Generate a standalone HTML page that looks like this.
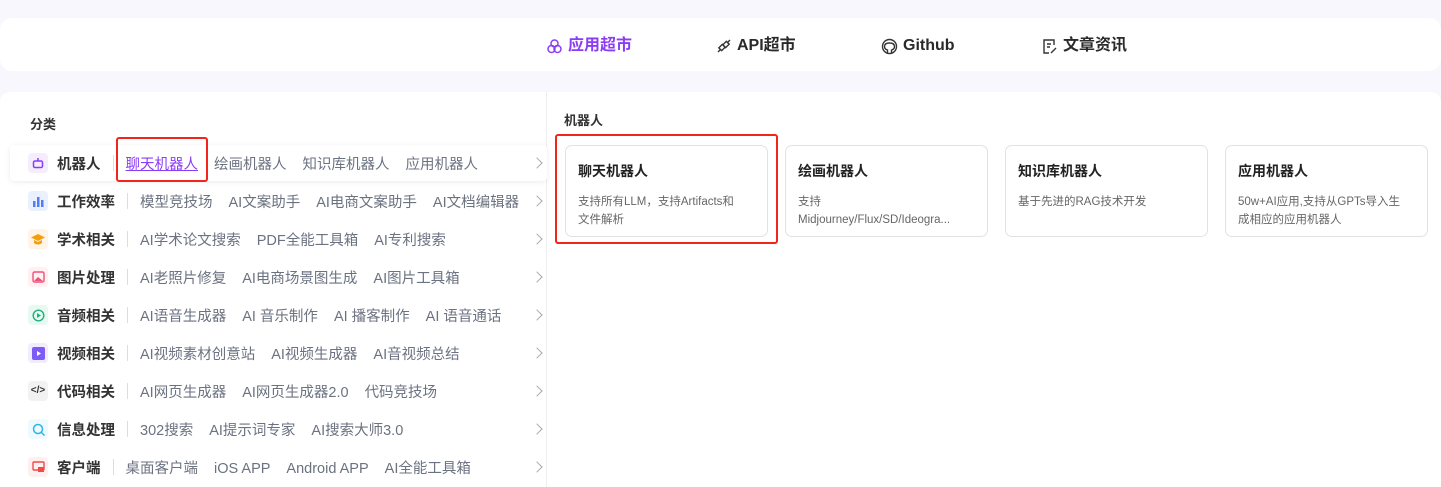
<!DOCTYPE html>
<html><head><meta charset="utf-8"><style>
*{box-sizing:border-box;margin:0;padding:0}
body{width:1441px;height:487px;background:#f8f7fd;font-family:"Liberation Sans","Noto Sans CJK SC",sans-serif;position:relative;overflow:hidden;color:#222}
.nav{position:absolute;left:0;top:18px;width:1441px;height:53px;background:#fff;border-radius:12px}
.nav .it{position:absolute;top:17px;height:22px;line-height:22px;font-size:16px;font-weight:bold;display:flex;align-items:center;gap:5px;color:#2a2a2a}
.main{position:absolute;left:0;top:92px;width:1441px;height:395px;background:#fff;border-radius:10px 10px 0 0}
.left{position:absolute;left:0;top:0;width:547px;height:395px;border-right:1px solid #eee}
.h{position:absolute;font-size:13px;font-weight:bold;color:#333}
.row{position:absolute;left:10px;width:537px;height:36px;line-height:36px;font-size:14.5px;color:#6b7280;white-space:nowrap}
.row.act{background:#fff;box-shadow:0 1px 6px rgba(0,0,0,.08);border-radius:4px}
.ic{display:inline-flex;vertical-align:middle;width:20px;height:20px;border-radius:4px;margin-left:18px;align-items:center;justify-content:center;line-height:1}
.lb{font-weight:bold;color:#333;margin-left:9px;margin-right:12px;position:relative;top:2px}
.sep{display:inline-block;vertical-align:middle;width:1px;height:16px;background:#ddd;margin-right:12px}
.s{margin-right:16px;position:relative;top:2px}
.chev{position:absolute;right:6px;top:14px;width:8px;height:8px;border-right:1.3px solid #aaa;border-top:1.3px solid #aaa;transform:rotate(45deg)}
.card{position:absolute;top:53px;width:203px;height:92px;border:1px solid #e2e2e2;border-radius:7px;padding:15px 12px}
.card b{display:block;font-size:14px;color:#222;margin-bottom:13px}
.card p{font-size:11.5px;color:#666;line-height:17.5px}
.red{position:absolute;border:2.5px solid #f2251d;border-radius:3px}
</style></head><body>
<div class="nav">
 <div class="it" style="left:546px;color:#8b3df5"><svg width="17" height="17" viewBox="0 0 17 17" fill="none" stroke="#8b3df5" stroke-width="1.5"><circle cx="8.5" cy="5.5" r="3.5"/><circle cx="5.5" cy="11" r="3.5"/><circle cx="11.5" cy="11" r="3.5"/></svg>应用超市</div>
 <div class="it" style="left:716px"><svg width="16" height="16" viewBox="0 0 16 16" fill="none" stroke="#333" stroke-width="1.4"><path d="M2 14l3-3M14 2l-3 3"/><rect x="4" y="7" width="4" height="5" transform="rotate(45 6 9.5)"/><rect x="8" y="4" width="4" height="5" transform="rotate(45 10 6.5)"/></svg>API超市</div>
 <div class="it" style="left:881px"><svg width="17" height="17" viewBox="0 0 17 17" fill="none" stroke="#333" stroke-width="1.4"><circle cx="8.5" cy="8.5" r="7"/><path d="M6.5 15v-3c-2-.5-3-1.5-3-3.5 0-2 1.5-3.5 5-3.5s5 1.5 5 3.5c0 2-1 3-3 3.5v3"/></svg>Github</div>
 <div class="it" style="left:1042px"><svg width="16" height="17" viewBox="0 0 16 17" fill="none" stroke="#333" stroke-width="1.4"><path d="M12 7V2H2v13h5"/><path d="M5 6h4M5 9h3M9 15l5-5"/></svg>文章资讯</div>
</div>
<div class="main">
 <div class="left">
  <div class="h" style="left:30px;top:22px">分类</div>
  <div class="row act" style="top:53px"><span class="ic" style="background:#f3edfe"><svg width="12" height="12" viewBox="0 0 12 12" fill="none" stroke="#8b3df5" stroke-width="1.5"><rect x="1.5" y="4" width="9" height="6.5" rx="1.5"/><path d="M6 1v3"/></svg></span><span class="lb">机器人</span><span class="sep"></span><span class="s" style="color:#8b3df5;text-decoration:underline">聊天机器人</span><span class="s">绘画机器人</span><span class="s">知识库机器人</span><span class="s">应用机器人</span><span class="chev"></span></div>
  <div class="row" style="top:91px"><span class="ic" style="background:#eaf0fe"><svg width="12" height="12"><rect x="1" y="6" width="2.5" height="6" fill="#4f7ef5"/><rect x="5" y="2" width="2.5" height="10" fill="#4f7ef5"/><rect x="9" y="5" width="2.5" height="7" fill="#4f7ef5"/></svg></span><span class="lb">工作效率</span><span class="sep"></span><span class="s">模型竞技场</span><span class="s">AI文案助手</span><span class="s">AI电商文案助手</span><span class="s">AI文档编辑器</span><span class="chev"></span></div>
  <div class="row" style="top:129px"><span class="ic" style="background:#fff4e5"><svg width="14" height="12"><path d="M7 1L0 4.5 7 8l7-3.5z M3 7v3c2 2 6 2 8 0V7L7 9z" fill="#f59e0b"/></svg></span><span class="lb">学术相关</span><span class="sep"></span><span class="s">AI学术论文搜索</span><span class="s">PDF全能工具箱</span><span class="s">AI专利搜索</span><span class="chev"></span></div>
  <div class="row" style="top:167px"><span class="ic" style="background:#fff0f2"><svg width="13" height="12"><rect x="1" y="1" width="11" height="10" rx="1.5" fill="none" stroke="#f0517a" stroke-width="1.4"/><path d="M2 10l4-4 5 4z" fill="#f0517a"/></svg></span><span class="lb">图片处理</span><span class="sep"></span><span class="s">AI老照片修复</span><span class="s">AI电商场景图生成</span><span class="s">AI图片工具箱</span><span class="chev"></span></div>
  <div class="row" style="top:205px"><span class="ic" style="background:#e8f8f2"><svg width="13" height="13"><circle cx="6.5" cy="6.5" r="5.3" fill="none" stroke="#22b07d" stroke-width="1.4"/><path d="M5 4v5l4-2.5z" fill="#22b07d"/></svg></span><span class="lb">音频相关</span><span class="sep"></span><span class="s">AI语音生成器</span><span class="s">AI 音乐制作</span><span class="s">AI 播客制作</span><span class="s">AI 语音通话</span><span class="chev"></span></div>
  <div class="row" style="top:243px"><span class="ic" style="background:#f1edfe"><svg width="13" height="13"><rect width="13" height="13" rx="2" fill="#7c5cf5"/><path d="M5 4v5l4-2.5z" fill="#fff"/></svg></span><span class="lb">视频相关</span><span class="sep"></span><span class="s">AI视频素材创意站</span><span class="s">AI视频生成器</span><span class="s">AI音视频总结</span><span class="chev"></span></div>
  <div class="row" style="top:281px"><span class="ic" style="background:#f2f2f2;font-size:10px;color:#333;font-weight:bold">&lt;/&gt;</span><span class="lb">代码相关</span><span class="sep"></span><span class="s">AI网页生成器</span><span class="s">AI网页生成器2.0</span><span class="s">代码竞技场</span><span class="chev"></span></div>
  <div class="row" style="top:319px"><span class="ic" style="background:#eefaff"><svg width="13" height="13" fill="none" stroke="#2bb6e8" stroke-width="1.5"><circle cx="6" cy="6" r="4.5"/><path d="M9.5 9.5l3 3"/></svg></span><span class="lb">信息处理</span><span class="sep"></span><span class="s">302搜索</span><span class="s">AI提示词专家</span><span class="s">AI搜索大师3.0</span><span class="chev"></span></div>
  <div class="row" style="top:357px"><span class="ic" style="background:#fff0f0"><svg width="13" height="12"><rect x="1" y="1" width="11" height="8" rx="1" fill="none" stroke="#f04a4a" stroke-width="1.4"/><rect x="6" y="6" width="6" height="5" fill="#f04a4a"/></svg></span><span class="lb">客户端</span><span class="sep"></span><span class="s">桌面客户端</span><span class="s">iOS APP</span><span class="s">Android APP</span><span class="s">AI全能工具箱</span><span class="chev"></span></div>
 </div>
 <div class="h" style="left:564px;top:18px">机器人</div>
 <div class="card" style="left:565px"><b>聊天机器人</b><p>支持所有LLM，支持Artifacts和<br>文件解析</p></div>
 <div class="card" style="left:785px"><b>绘画机器人</b><p>支持<br>Midjourney/Flux/SD/Ideogra...</p></div>
 <div class="card" style="left:1005px"><b>知识库机器人</b><p>基于先进的RAG技术开发</p></div>
 <div class="card" style="left:1225px"><b>应用机器人</b><p>50w+AI应用,支持从GPTs导入生<br>成相应的应用机器人</p></div>
</div>
<div class="red" style="left:116px;top:137px;width:92px;height:45px"></div>
<div class="red" style="left:555px;top:134px;width:223px;height:110px"></div>
</body></html>
